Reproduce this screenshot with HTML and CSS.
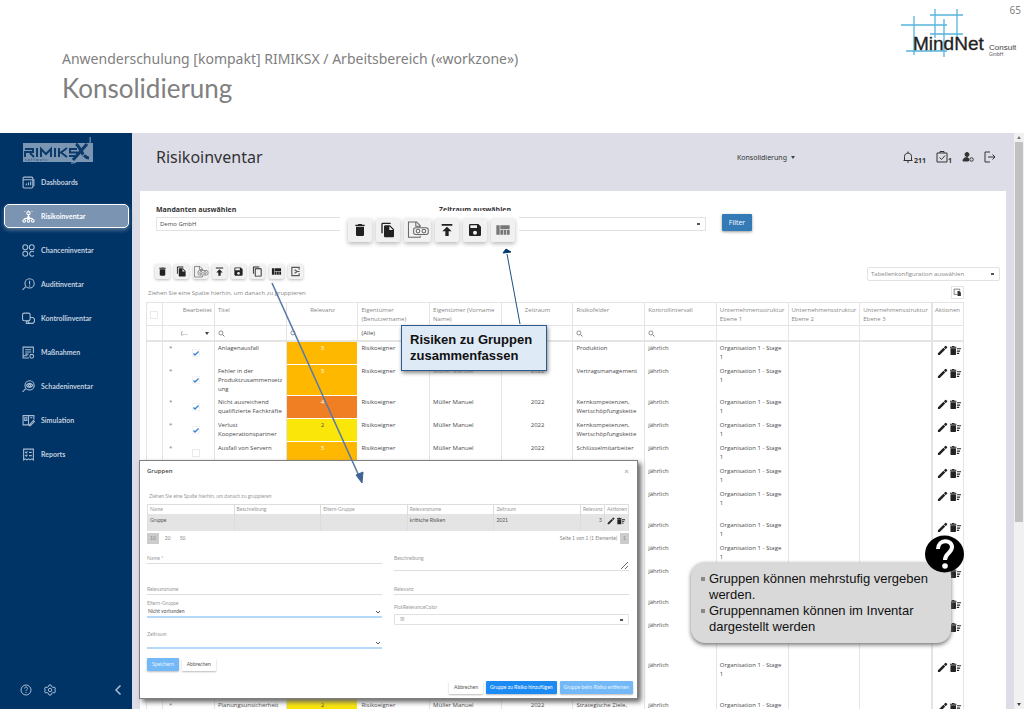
FILE: index.html
```html
<!DOCTYPE html>
<html lang="de">
<head>
<meta charset="utf-8">
<title>Konsolidierung – RIMIKSX</title>
<link rel="stylesheet" href="styles.css">
</head>
<body>
<svg class="sprite" aria-hidden="true">
  <symbol id="trash" viewBox="0 0 24 24"><path d="M6 19c0 1.100.9 2 2 2h8c1.100 0 2-.9 2-2V7H6zM19 4h-3.500l-1-1h-5l-1 1H5v2h14z"/></symbol>
  <symbol id="copyfill" viewBox="0 0 24 24"><path d="M16 1H4C2.900 1 2 1.900 2 3v14h2V3h12zM15 5H8C6.900 5 6 5.900 6 7v14c0 1.100.9 2 2 2h11c1.100 0 2-.9 2-2V11zm-1 7V6.500l5.500 5.500z"/></symbol>
  <symbol id="copy" viewBox="0 0 24 24"><path d="M16 1H4C2.900 1 2 1.900 2 3v14h2V3h12zm3 4H8C6.900 5 6 5.900 6 7v14c0 1.100.9 2 2 2h11c1.100 0 2-.9 2-2V7c0-1.100-.9-2-2-2zm0 16H8V7h11z"/></symbol>
  <symbol id="docview" viewBox="0 0 30 24"><g fill="none" stroke="#666" stroke-width="1.400"><path d="M18 8V6l-5-5H2v21h16v-2M12 1v6h6"/><rect x="9" y="9" width="20" height="9" rx="3"/><circle cx="15" cy="13.500" r="2.500"/><circle cx="23" cy="13.500" r="2.500"/></g></symbol>
  <symbol id="upload" viewBox="0 0 24 24"><path d="M4 3h16v2.500H4zM12 7l-7 7h4.500v7h5v-7H19z"/></symbol>
  <symbol id="save" viewBox="0 0 24 24"><path d="M17 3H5a2 2 0 0 0-2 2v14c0 1.100.9 2 2 2h14c1.100 0 2-.9 2-2V7zm-5 16a3 3 0 1 1 0-6 3 3 0 0 1 0 6zm3-10H5V5h10z" fill-rule="evenodd"/></symbol>
  <symbol id="quilt" viewBox="0 0 24 24"><path d="M2 5h5v14H2zM8 5h14v6H8zM8 12h4v7H8zM13 12h4v7h-4zM18 12h4v7h-4z"/></symbol>
  <symbol id="export" viewBox="0 0 24 24"><path d="M20 8V3H4v18h16v-5M10 8l6 4-6 4M16 12h5" fill="none" stroke="#555" stroke-width="2.500"/></symbol>
  <symbol id="chooser" viewBox="0 0 24 24"><path d="M3 3h15v4M3 3v14h8" fill="none" stroke="#555" stroke-width="2"/><path d="M12 8h5l4 4v9h-9z"/></symbol>
  <symbol id="pencil" viewBox="0 0 24 24"><path d="M2 18v4h4L18 10l-4-4zM22 6a1.500 1.500 0 0 0 0-2l-2-2a1.500 1.500 0 0 0-2 0l-3 3 4 4z"/></symbol>
  <symbol id="sweep" viewBox="0 0 24 24"><path d="M1 20c0 1 1 2 2 2h8c1 0 2-1 2-2V7H1zM14 4h-4L9 2H5L4 4H0v2h14zM15 7h9v2.500h-9zM15 12h7v2.500h-7zM15 17h5v2.500h-5z"/></symbol>
  <symbol id="search" viewBox="0 0 12 12"><circle cx="5" cy="5" r="3.500" fill="none" stroke="#666" stroke-width="1.200"/><path d="M8 8l3 3" stroke="#666" stroke-width="1.600"/></symbol>
</svg>

<header class="slide-head">
  <div class="slide-titles">
    <p class="slide-sub">Anwenderschulung [kompakt] RIMIKSX / Arbeitsbereich («workzone»)</p>
    <h1 class="slide-title">Konsolidierung</h1>
  </div>
  <svg class="brand" viewBox="0 0 118 52" role="img" aria-label="MindNet Consult GmbH">
    <g stroke="#56b4dc" stroke-width="1.300"><path d="M2 17h46M31 7h33M31 26h33M7 43h41M15 8v39M36 1v29M45 11v38M58 1v29"/></g>
    <text x="14" y="42" font-size="19" fill="#222" stroke="#222" stroke-width="0.300">MindNet</text>
    <text x="90" y="42" font-size="8" fill="#444">Consult</text>
    <text x="90" y="48" font-size="5" fill="#555">GmbH</text>
  </svg>
  <span class="page-no">65</span>
</header>

<div class="app">
  <nav class="side">
    <svg class="logo" viewBox="0 0 70 30" role="img" aria-label="RIMIKSX Software">
      <rect x="0" y="7" width="70" height="19" fill="#7b96b3"/>
      <g fill="none" stroke="#0b3a6b" stroke-width="2"><path d="M2 21v-5h8v-3H2M7 17l4 4M14 12v9M18 21v-8l5 5 5-5v8M32 12v9M36 12v9M44 12l-6 4.500 6 4.500M54 13h-7v3.500h7V20h-8"/></g>
      <path d="M53 8c5 3 6 14 13 14M64 8L50 24" fill="none" stroke="#0b3a6b" stroke-width="3"/>
      <path d="M48 27c9 1 21-17 19-26" fill="none" stroke="#7b96b3" stroke-width="1.200"/>
      <text x="2" y="25" font-size="4" fill="#1a4674">s o f t w a r e</text>
    </svg>
    <ul class="menu">
      <li><a href="#"><svg viewBox="0 0 24 24"><rect x="2" y="2" width="18" height="20" rx="2"/><path d="M2 7h20v12M8 17v-3M12 17v-5M16 17v-7"/></svg>Dashboards</a></li>
      <li><a href="#" class="active"><svg viewBox="0 0 24 24"><circle cx="12" cy="6" r="3"/><path d="M12 9v8M4 18c0-4 16-4 16 0M12 1V0M6 3L5 2M18 3l1-1M9 13h6"/><circle cx="4" cy="20" r="2.500"/><circle cx="12" cy="20" r="2.500"/><circle cx="20" cy="20" r="2.500"/></svg>Risikoinventar</a></li>
      <li><a href="#"><svg viewBox="0 0 24 24"><circle cx="6" cy="6" r="4.500"/><circle cx="18" cy="6" r="4.500"/><circle cx="6" cy="18" r="4.500"/><path d="M22 15a4.500 4.500 0 1 0 0 6"/></svg>Chanceninventar</a></li>
      <li><a href="#"><svg viewBox="0 0 24 24"><circle cx="14" cy="10" r="8.500"/><path d="M7 16l-6 6M14 5v7M14 14v2"/></svg>Auditinventar</a></li>
      <li><a href="#"><svg viewBox="0 0 24 24"><rect x="1" y="2" width="14" height="14" rx="3"/><path d="M15 10h5l3 3v5l-3 3h-6l-4-5M8 16v5h5"/></svg>Kontrollinventar</a></li>
      <li><a href="#"><svg viewBox="0 0 24 24"><path d="M13 22H2V2h19v11M6 7h11M6 11h11M6 15h6M2 18h8"/><circle cx="18" cy="19" r="3.500"/></svg>Maßnahmen</a></li>
      <li><a href="#"><svg viewBox="0 0 24 24"><circle cx="14" cy="10" r="8.500"/><path d="M7 16l-6 6M8 10c4-5 8-5 12 0-4 5-8 5-12 0"/><circle cx="14" cy="10" r="2"/></svg>Schadeninventar</a></li>
      <li><a href="#"><svg viewBox="0 0 24 24"><path d="M22 10V3H2v17h10M12 3v17M5 7h4v5H5zM15 7h4M13 21l8-9 2 2-8 8z"/></svg>Simulation</a></li>
      <li><a href="#"><svg viewBox="0 0 24 24"><path d="M3 22V2h18v20l-3-2-3 2-3-2-3 2-3-2zM6 7l2 2 2-3M6 13l2 2 2-3M13 8h5M13 14h5"/></svg>Reports</a></li>
    </ul>
    <div class="side-foot">
      <button class="plain" aria-label="Hilfe"><svg viewBox="0 0 24 24"><circle cx="12" cy="12" r="10"/><path d="M9 9c0-4 6-4 6 0 0 2-3 2-3 5M12 16v2"/></svg></button>
      <button class="plain" aria-label="Einstellungen"><svg viewBox="0 0 24 24"><path d="M10 2h4l1 3 3 2 3-1 2 4-2 2 2 2-2 4-3-1-3 2-1 3h-4l-1-3-3-2-3 1-2-4 2-2-2-2 2-4 3 1 3-2z"/><circle cx="12" cy="12" r="3.500"/></svg></button>
      <button class="plain last" aria-label="Einklappen"><svg viewBox="0 0 24 24"><path d="M17 3l-9 9 9 9" stroke-width="3"/></svg></button>
    </div>
  </nav>

  <main class="main">
    <div class="top">
      <h2 class="page-title">Risikoinventar</h2>
      <button class="mode">Konsolidierung <span class="caret"></span></button>
      <div class="top-icons">
        <button class="plain" aria-label="Benachrichtigungen"><svg viewBox="0 0 24 24"><path d="M3 19h18M5 18V11c0-9 14-9 14 0v7M12 4V1M10 22h4" /></svg><b>211</b></button>
        <button class="plain" aria-label="Aufgaben"><svg viewBox="0 0 24 24"><path d="M2 4h20v18H2zM8 4V1h8v3M7 13l4 4 7-8"/></svg><b>1</b></button>
        <button class="plain" aria-label="Benutzer"><svg viewBox="0 0 24 24"><g class="solid"><circle cx="10" cy="7" r="4"/><path d="M2 20c0-8 10-8 11-5v5z"/></g><circle cx="19" cy="17" r="3.500"/></svg></button>
        <button class="plain" aria-label="Abmelden"><svg viewBox="0 0 24 24"><path d="M12 2H2v20h10M8 12h14M17 7l5 5-5 5"/></svg></button>
      </div>
    </div>

    <section class="card">
      <div class="filters">
        <div class="field"><label for="mandant">Mandanten auswählen</label><select id="mandant"><option>Demo GmbH</option></select></div>
        <div class="field"><label for="zeit">Zeitraum auswählen</label><select id="zeit" class="arrow"><option></option></select></div>
        <button class="btn-filter">Filter</button>
      </div>

      <div class="tools">
        <div class="toolbar">
          <button aria-label="Löschen"><svg><use href="#trash"/></svg></button>
          <button aria-label="Kopieren"><svg><use href="#copyfill"/></svg></button>
          <button aria-label="Vorschau" class="wide"><svg><use href="#docview"/></svg></button>
          <button aria-label="Hochladen"><svg><use href="#upload"/></svg></button>
          <button aria-label="Speichern"><svg><use href="#save"/></svg></button>
          <button aria-label="Duplizieren"><svg><use href="#copy"/></svg></button>
          <button aria-label="Gruppieren"><svg><use href="#quilt"/></svg></button>
          <button aria-label="Exportieren"><svg><use href="#export"/></svg></button>
        </div>
        <select class="config arrow" aria-label="Tabellenkonfiguration"><option>Tabellenkonfiguration auswählen</option></select>
      </div>
      <div class="hint"><span>Ziehen Sie eine Spalte hierhin, um danach zu gruppieren</span><button class="chooser" aria-label="Spaltenauswahl"><svg><use href="#chooser"/></svg></button></div>

      <table class="grid">
        <colgroup><col class="c-check"><col class="c-edit"><col><col><col><col><col><col><col><col><col><col><col class="c-act"></colgroup>
        <thead>
          <tr class="heads"><th><input type="checkbox" aria-label="Alle auswählen"></th><th class="r">Bearbeitet</th><th>Titel</th><th class="c">Relevanz</th><th>Eigentümer (Benutzername)</th><th>Eigentümer (Vorname Name)</th><th class="c">Zeitraum</th><th>Risikofelder</th><th>Kontrollintervall</th><th>Unternehmensstruktur Ebene 1</th><th>Unternehmensstruktur Ebene 2</th><th>Unternehmensstruktur Ebene 3</th><th class="act">Aktionen</th></tr>
          <tr class="search"><td></td><td><div class="pick"><span>(...</span><span class="caret"></span></div></td><td><svg><use href="#search"/></svg></td><td><svg><use href="#search"/></svg></td><td>(Alle)</td><td><svg><use href="#search"/></svg></td><td></td><td><svg><use href="#search"/></svg></td><td><svg><use href="#search"/></svg></td><td></td><td></td><td></td><td class="act"></td></tr>
        </thead>
        <tbody>
          <tr class="h2"><td></td><td class="edit"><div><i>*</i><input type="checkbox" checked aria-label="Bearbeitet"></div></td><td>Anlagenausfall</td><td class="rel amber">3</td><td>Risikoeigner</td><td></td><td class="c"></td><td>Produktion</td><td>jährlich</td><td>Organisation 1 - Stage 1</td><td></td><td></td><td class="act"><button aria-label="Bearbeiten"><svg><use href="#pencil"/></svg></button><button aria-label="Löschen"><svg><use href="#sweep"/></svg></button></td></tr>
          <tr class="h3"><td></td><td class="edit"><div><i>*</i><input type="checkbox" checked aria-label="Bearbeitet"></div></td><td>Fehler in der Produktzusammensetzung</td><td class="rel amber">3</td><td>Risikoeigner</td><td>Müller Manuel</td><td class="c">2022</td><td>Vertragsmanagement</td><td>jährlich</td><td>Organisation 1 - Stage 1</td><td></td><td></td><td class="act"><button aria-label="Bearbeiten"><svg><use href="#pencil"/></svg></button><button aria-label="Löschen"><svg><use href="#sweep"/></svg></button></td></tr>
          <tr class="h2"><td></td><td class="edit"><div><i>*</i><input type="checkbox" checked aria-label="Bearbeitet"></div></td><td>Nicht ausreichend qualifizierte Fachkräfte</td><td class="rel orange">4</td><td>Risikoeigner</td><td>Müller Manuel</td><td class="c">2022</td><td>Kernkompetenzen, Wertschöpfungskette</td><td>jährlich</td><td>Organisation 1 - Stage 1</td><td></td><td></td><td class="act"><button aria-label="Bearbeiten"><svg><use href="#pencil"/></svg></button><button aria-label="Löschen"><svg><use href="#sweep"/></svg></button></td></tr>
          <tr class="h2"><td></td><td class="edit"><div><i>*</i><input type="checkbox" checked aria-label="Bearbeitet"></div></td><td>Verlust Kooperationspartner</td><td class="rel yellow">2</td><td>Risikoeigner</td><td>Müller Manuel</td><td class="c">2022</td><td>Kernkompetenzen, Wertschöpfungskette</td><td>jährlich</td><td>Organisation 1 - Stage 1</td><td></td><td></td><td class="act"><button aria-label="Bearbeiten"><svg><use href="#pencil"/></svg></button><button aria-label="Löschen"><svg><use href="#sweep"/></svg></button></td></tr>
          <tr class="h2"><td></td><td class="edit"><div><i>*</i><input type="checkbox" aria-label="Bearbeitet"></div></td><td>Ausfall von Servern</td><td class="rel amber">3</td><td>Risikoeigner</td><td>Müller Manuel</td><td class="c">2022</td><td>Schlüsselmitarbeiter</td><td>jährlich</td><td>Organisation 1 - Stage 1</td><td></td><td></td><td class="act"><button aria-label="Bearbeiten"><svg><use href="#pencil"/></svg></button><button aria-label="Löschen"><svg><use href="#sweep"/></svg></button></td></tr>
          <tr class="h2"><td></td><td></td><td></td><td></td><td></td><td></td><td></td><td></td><td>jährlich</td><td>Organisation 1 - Stage 1</td><td></td><td></td><td class="act"><button aria-label="Bearbeiten"><svg><use href="#pencil"/></svg></button><button aria-label="Löschen"><svg><use href="#sweep"/></svg></button></td></tr>
          <tr class="h3"><td></td><td></td><td></td><td></td><td></td><td></td><td></td><td></td><td>jährlich</td><td>Organisation 1 - Stage 1</td><td></td><td></td><td class="act"><button aria-label="Bearbeiten"><svg><use href="#pencil"/></svg></button><button aria-label="Löschen"><svg><use href="#sweep"/></svg></button></td></tr>
          <tr class="h2"><td></td><td></td><td></td><td></td><td></td><td></td><td></td><td></td><td>jährlich</td><td>Organisation 1 - Stage 1</td><td></td><td></td><td class="act"><button aria-label="Bearbeiten"><svg><use href="#pencil"/></svg></button><button aria-label="Löschen"><svg><use href="#sweep"/></svg></button></td></tr>
          <tr class="h2"><td></td><td></td><td></td><td></td><td></td><td></td><td></td><td></td><td>jährlich</td><td>Organisation 1 - Stage 1</td><td></td><td></td><td class="act"><button aria-label="Bearbeiten"><svg><use href="#pencil"/></svg></button><button aria-label="Löschen"><svg><use href="#sweep"/></svg></button></td></tr>
          <tr class="h3"><td></td><td></td><td></td><td></td><td></td><td></td><td></td><td></td><td>jährlich</td><td></td><td></td><td></td><td class="act"><button aria-label="Bearbeiten"><svg><use href="#pencil"/></svg></button><button aria-label="Löschen"><svg><use href="#sweep"/></svg></button></td></tr>
          <tr class="h2"><td></td><td></td><td></td><td></td><td></td><td></td><td></td><td></td><td>jährlich</td><td></td><td></td><td></td><td class="act"><button aria-label="Bearbeiten"><svg><use href="#pencil"/></svg></button><button aria-label="Löschen"><svg><use href="#sweep"/></svg></button></td></tr>
          <tr class="h4"><td></td><td></td><td></td><td></td><td></td><td></td><td></td><td></td><td>jährlich</td><td></td><td></td><td></td><td class="act"><button aria-label="Bearbeiten"><svg><use href="#pencil"/></svg></button><button aria-label="Löschen"><svg><use href="#sweep"/></svg></button></td></tr>
          <tr class="h4"><td></td><td></td><td></td><td></td><td></td><td></td><td></td><td></td><td>jährlich</td><td>Organisation 1 - Stage 1</td><td></td><td></td><td class="act"><button aria-label="Bearbeiten"><svg><use href="#pencil"/></svg></button><button aria-label="Löschen"><svg><use href="#sweep"/></svg></button></td></tr>
          <tr class="h2"><td></td><td class="edit"><div><i>*</i></div></td><td>Planungsunsicherheit</td><td class="rel yellow">2</td><td>Risikoeigner</td><td>Müller Manuel</td><td class="c">2022</td><td>Strategische Ziele, </td><td>jährlich</td><td>Organisation 1 - Stage</td><td></td><td></td><td class="act"><button aria-label="Bearbeiten"><svg><use href="#pencil"/></svg></button><button aria-label="Löschen"><svg><use href="#sweep"/></svg></button></td></tr>
        </tbody>
      </table>
    </section>
  </main>
  <div class="scroll" aria-hidden="true"><span class="up"></span><span class="thumb"></span><span class="down"></span></div>
</div>

<div class="toolbar zoomed">
  <button aria-label="Löschen"><svg><use href="#trash"/></svg></button>
  <button aria-label="Kopieren"><svg><use href="#copyfill"/></svg></button>
  <button aria-label="Vorschau" class="wide"><svg><use href="#docview"/></svg></button>
  <button aria-label="Hochladen"><svg><use href="#upload"/></svg></button>
  <button aria-label="Speichern"><svg><use href="#save"/></svg></button>
  <button aria-label="Gruppieren" class="faded"><svg><use href="#quilt"/></svg></button>
</div>

<section class="dialog" role="dialog" aria-labelledby="dlg-title">
  <div class="dlg-head"><h3 id="dlg-title">Gruppen</h3><button class="plain" aria-label="Schließen">×</button></div>
  <p class="dlg-hint">Ziehen Sie eine Spalte hierhin, um danach zu gruppieren</p>
  <table class="mini">
    <colgroup><col><col><col><col><col><col class="c-n"><col class="c-n"></colgroup>
    <thead><tr><th>Name</th><th>Beschreibung</th><th>Eltern-Gruppe</th><th>Relevanzname</th><th>Zeitraum</th><th class="r">Relevanz</th><th>Aktionen</th></tr></thead>
    <tbody><tr><td>Gruppe</td><td></td><td></td><td>kritische Risiken</td><td>2021</td><td class="r">3</td><td class="act"><button aria-label="Bearbeiten"><svg><use href="#pencil"/></svg></button><button aria-label="Löschen"><svg><use href="#sweep"/></svg></button></td></tr></tbody>
  </table>
  <div class="pager"><button class="on">10</button><button>20</button><button>50</button><span>Seite 1 von 1 (1 Elemente)</span><button class="on">1</button></div>
  <form class="form">
    <div class="col">
      <div class="line f1"><label for="n">Name *</label><input id="n"></div>
      <div class="line f2"><label for="rn">Relevanzname</label><input id="rn"></div>
      <div class="line blue f3"><label for="eg">Eltern-Gruppe</label><select id="eg"><option>Nicht vorhanden</option></select></div>
      <div class="line blue f4"><label for="zr">Zeitraum</label><select id="zr"><option></option></select></div>
      <div class="acts"><button type="button" class="b light">Speichern</button><button type="button" class="b white">Abbrechen</button></div>
    </div>
    <div class="col">
      <div class="line f5"><label for="be">Beschreibung</label><textarea id="be"></textarea></div>
      <div class="line f6"><label for="re">Relevanz</label><input id="re"></div>
      <div class="color"><label for="pc">PickRelevanceColor</label><select id="pc" class="arrow"><option>☒</option></select></div>
    </div>
  </form>
  <div class="dlg-foot"><button class="b white">Abbrechen</button><button class="b blue-btn">Gruppe zu Risiko hinzufügen</button><button class="b light">Gruppe beim Risiko entfernen</button></div>
</section>

<svg class="arrows" viewBox="0 0 260 240" aria-hidden="true">
  <path d="M4 38l87 193" stroke="#587ba8" stroke-width="1.600"/>
  <path d="M94 238l-6-8 7-3z" fill="#3d6496" stroke="#3d6496"/>
  <path d="M252 79l-13-70" stroke="#1c4f82" stroke-width="1"/>
  <path d="M235 8l3-4 5 3z" fill="#003a70" stroke="#003a70"/>
</svg>
<p class="callout">Risiken zu Gruppen zusammenfassen</p>
<aside class="note"><ul><li>Gruppen können mehrstufig vergeben werden.</li><li>Gruppennamen können im Inventar dargestellt werden</li></ul></aside>
<svg class="question" viewBox="0 0 39 38" role="img" aria-label="Frage"><ellipse cx="19.500" cy="19" rx="19.500" ry="18.500"/><path d="M13 14c0-10 14-10 14-2 0 6-7 6-7 13" fill="none" stroke="#fff" stroke-width="4"/><circle cx="20" cy="31" r="2.800" fill="#fff"/></svg>
</body>
</html>
```
FILE: styles.css
```css
* { box-sizing: border-box; }
body { margin: 0; height: 100vh; overflow: hidden; position: relative; display: flex; flex-direction: column; background: #fff; font: 6px/9px "Open Sans", "Noto Sans", sans-serif; color: #4a4a4a; }
h1, h2, h3, p, ul { margin: 0; padding: 0; font-weight: 400; }
ul { list-style: none; }
button, select, input, textarea { font: inherit; color: inherit; margin: 0; padding: 0; border: 0; border-radius: 0; background: none; appearance: none; outline: 0; }
a { text-decoration: none; color: inherit; }
svg { display: block; }
.sprite { position: absolute; width: 0; height: 0; }
.plain { display: flex; align-items: center; }

/* slide header */
.slide-head { flex: none; height: 133px; display: flex; align-items: flex-start; color: #808080; }
.slide-titles { flex: 1; padding: 49px 0 0 62px; }
.slide-sub { font: 14px/20px "Noto Sans", sans-serif; }
.slide-title { font: 26px/38px Lato, sans-serif; }
.brand { width: 118px; height: 52px; margin-top: 8px; font-family: "Liberation Sans", sans-serif; }
.page-no { width: 24px; margin: 4px 3px 0 -20px; text-align: right; font: 10px/12px "Noto Sans", sans-serif; }

.app { flex: 1; min-height: 0; display: flex; background: #dddde8; }

/* sidebar */
.side { width: 132px; flex: none; display: flex; flex-direction: column; background: #003366; color: #c2d0df; font-family: Lato, sans-serif; }
.side svg { fill: none; stroke: #a9bdd2; stroke-width: 2; width: 12px; height: 12px; }
.side .logo { width: 70px; height: 30px; margin: 3px 0 0 23px; stroke: none; }
.menu { display: flex; flex-direction: column; gap: 10px; padding: 4px 3px 0 4px; }
.menu a { display: flex; align-items: center; gap: 6px; height: 24px; padding-left: 17px; border: 1px solid transparent; border-radius: 5px; font-size: 7px; font-weight: 700; }
.menu svg { width: 13px; height: 13px; }
.menu a.active { background: #7a94b1; border-color: #fff; color: #fff; box-shadow: 0 2px 4px #5a7898; }
.menu .active svg { stroke: #fff; }
.side-foot { display: flex; gap: 12px; margin-top: auto; padding: 0 8px 13px 20px; }
.side-foot .last { margin-left: auto; }

/* main */
.main { flex: 1; min-width: 0; display: flex; flex-direction: column; padding: 0 8px; }
.top { flex: none; height: 58px; display: flex; align-items: center; padding: 0 10px 10px 16px; color: #333; }
.page-title { flex: 1; font: 16px/24px "Noto Sans", sans-serif; }
.mode { font: 7px/9px "Noto Sans", sans-serif; display: flex; align-items: center; gap: 4px; margin-right: 107px; }
.caret { border: 2px solid transparent; border-top: 3px solid #444; border-bottom: 0; }
.top-icons { display: flex; gap: 10px; }
.top-icons svg { width: 12px; height: 12px; fill: none; stroke: #333; stroke-width: 2; }
.top-icons .solid { fill: #333; }
.top-icons b { font-size: 7px; line-height: 8px; align-self: flex-end; margin-bottom: -2px; }
.card { flex: 1; min-height: 0; overflow: hidden; background: #fff; padding: 14px 6px 0; }
.filters { display: flex; gap: 16px; padding: 0 10px; }
.field { width: 267px; }
.field label { display: block; font-size: 7px; line-height: 9px; font-weight: 700; color: #333; margin-bottom: 3px; }
select { width: 100%; height: 14px; padding: 0 3px; border: 1px solid #e2e2e2; border-radius: 1px; }
.arrow { background: linear-gradient(#555, #555) no-repeat right 5px center / 3px 2px; }
.btn-filter { align-self: flex-end; width: 30px; height: 17px; font-size: 7px; color: #fff; background: #337ab7; box-shadow: 0 1px 3px #999; border-radius: 1px; }
.tools { display: flex; justify-content: space-between; margin-top: 33px; padding-left: 9px; }
.toolbar { display: flex; gap: 4px; }
.toolbar button { width: 15px; height: 15px; display: grid; place-items: center; background: #f1f1f1; border-radius: 2px; box-shadow: 0 1px 3px #bbb; }
.toolbar svg { width: 11px; height: 11px; fill: #222; }
.toolbar .wide svg { width: 16px; height: 12px; }
.config { width: 133px; margin-top: 3px; color: #888; border-radius: 2px; }
.hint { display: flex; justify-content: space-between; align-items: center; height: 21px; padding: 1px 36px 0 2px; color: #888; }
.hint span { padding-top: 2px; }
.chooser { width: 13px; height: 13px; display: grid; place-items: center; border: 1px solid #e5e5e5; }
.chooser svg { width: 9px; height: 9px; fill: #333; }

/* grid */
.grid { width: calc(100% - 36px); table-layout: fixed; border-collapse: separate; border-spacing: 0; border-left: 1px solid #e4e4e4; }
.c-check { width: 16px; } .c-edit { width: 52px; } .c-act { width: 32px; }
.grid th, .grid td { padding: 2px 2px 0 3px; border-right: 1px solid #e4e4e4; vertical-align: top; text-align: left; overflow-wrap: anywhere; overflow: hidden; }
.grid th { height: 23px; padding-top: 3px; font-weight: 400; color: #888; border-top: 1px solid #e4e4e4; white-space: normal; }
.grid .search td { height: 17px; border-top: 1px solid #e4e4e4; border-bottom: 2px solid #e4e4e4; vertical-align: middle; padding-top: 0; }
.search svg { width: 7px; height: 7px; }
.pick { display: flex; justify-content: space-between; align-items: center; padding: 0 3px 0 15px; }
.grid .c { text-align: center; } .grid .r { text-align: right; }
.grid tbody tr { height: 23px; } .grid tbody .h3 { height: 31px; } .grid tbody .h4 { height: 40px; }
.grid .rel { text-align: center; color: #fff; border-bottom: 1px solid #fff; border-right-color: #fff; }
.grid .amber { background: #ffb800; } .grid .orange { background: #ef7f22; } .grid .yellow { background: #fbe60a; color: #555; }
input[type="checkbox"] { display: block; width: 8px; height: 8px; border: 1px solid #eaeaea; }
.grid th input { margin: 5px 0 0; }
.edit div { display: flex; justify-content: space-between; padding: 0 12px 0 3px; }
.edit i { font-style: normal; line-height: 8px; color: #777; }
.edit input { margin-top: 5px; }
.h3 .edit input { margin-top: 9px; }
.edit input:checked { border-color: #f3f3f3; background: no-repeat center / 6px 5px url("data:image/svg+xml,%3Csvg xmlns='http://www.w3.org/2000/svg' viewBox='0 0 12 10'%3E%3Cpath d='M1 5l3 3 7-7' fill='none' stroke='%232f7fd6' stroke-width='2.500'/%3E%3C/svg%3E"); }
.grid .act { border-left: 1px solid #e4e4e4; padding-left: 2px; white-space: nowrap; }
.grid td.act { padding-left: 4px; padding-top: 3px; }
.act button { display: inline-block; margin-right: 2px; }
.act svg { width: 11px; height: 11px; fill: #222; }

.scroll { width: 10px; display: flex; flex-direction: column; align-items: center; background: #f1f1f1; flex: none; }
.scroll .thumb { width: 8px; flex: 0 0 66%; background: #c1c1c1; }
.scroll .up { margin: 3px 0; border: 2px solid transparent; border-bottom: 3px solid #777; border-top: 0; }
.scroll .down { margin: auto 0 3px; border: 2px solid transparent; border-top: 3px solid #444; border-bottom: 0; }

/* enlarged toolbar laid over the filters */
.zoomed { position: absolute; left: 340px; top: 211px; padding: 7px 4px 4px 8px; gap: 4px; background: #fff; }
.zoomed button { width: 24px; height: 24px; box-shadow: 0 2px 4px #bbb; }
.zoomed svg { width: 16px; height: 16px; }
.zoomed .wide { width: 27px; }
.zoomed .wide svg { width: 22px; height: 18px; }
.zoomed .faded svg { fill: #777; }

/* dialog */
.dialog { position: absolute; left: 139px; top: 460px; width: 499px; height: 239px; padding: 0 8px 0 7px; display: flex; flex-direction: column; background: #fff; border: 1px solid #7f7f7f; box-shadow: 3px 3px 5px #666; font: 5px/7px Lato, sans-serif; color: #777; }
.dlg-head { display: flex; justify-content: space-between; align-items: center; height: 21px; }
.dlg-head h3 { font: 600 6px/9px "Open Sans", sans-serif; color: #444; }
.dlg-head button { font-size: 8px; color: #999; }
.dlg-hint { padding: 11px 2px 4px; color: #999; }
.mini { width: 100%; table-layout: fixed; border-spacing: 0; border-left: 1px solid #e0e0e0; }
.mini .c-n { width: 24px; }
.mini th, .mini td { padding: 1px 2px; border-right: 1px solid #ddd; text-align: left; font-weight: 400; vertical-align: top; white-space: nowrap; }
.mini th { height: 10px; border-top: 1px solid #ddd; color: #999; }
.mini td { height: 17px; background: #e4e4e4; padding-top: 3px; color: #555; }
.mini .r { text-align: right; }
.mini td.act { padding: 3px 2px 0; }
.mini .act svg { width: 8px; height: 8px; }
.pager { display: flex; align-items: center; height: 15px; gap: 3px; color: #888; }
.pager button { min-width: 8px; height: 11px; padding: 0 3px; }
.pager .on { background: #ccc; }
.pager span { margin-left: auto; }
.form { display: grid; grid-template-columns: 1fr 1fr; gap: 12px; }
.line { display: flex; flex-direction: column; justify-content: flex-end; border-bottom: 1px solid #ddd; color: #999; }
.line input { height: 1px; }
.line textarea { height: 8px; resize: vertical; }
.f1 { height: 18px; } .f2 { height: 31px; } .f5 { height: 25px; } .f6 { height: 24px; }
.line.blue { height: 23px; border-bottom: 2px solid #b5d9fa; }
.line.f4 { height: 31px; }
.line select { height: 9px; padding: 0 1px; border: 0; color: #555; background: no-repeat right 1px center / 6px 4px url("data:image/svg+xml,%3Csvg xmlns='http://www.w3.org/2000/svg' viewBox='0 0 6 4'%3E%3Cpath d='M1 1l2 2 2-2' fill='none' stroke='%23555'/%3E%3C/svg%3E"); }
.acts { display: flex; gap: 3px; padding-top: 9px; }
.color { padding-top: 9px; color: #999; }
.color label { display: block; margin-bottom: 3px; }
.color select { height: 11px; padding-left: 5px; }
.b { height: 13px; padding: 0 4px; font-size: 5px; border-radius: 1px; box-shadow: 0 1px 2px #bbb; white-space: nowrap; }
.light { background: #74b9f7; color: #e8f4ff; }
.blue-btn { background: #1c8af3; color: #fff; }
.white { background: #fff; color: #555; }
.dlg-foot { margin: auto -4px 4px 0; display: flex; justify-content: flex-end; gap: 3px; }
.acts .b, .dlg-foot .white { padding: 0 5px; }

/* annotations */
.arrows { position: absolute; left: 268px; top: 245px; width: 260px; height: 240px; }
.callout { position: absolute; left: 401px; top: 325px; width: 146px; padding: 6px 8px; background: #dfeaf7; border: 1px solid #2a5a8e; box-shadow: 1px 2px 4px #888; font: 700 13px/16px "Liberation Sans", sans-serif; color: #111; }
.note { position: absolute; left: 691px; top: 562px; width: 260px; padding: 9px 8px 8px 10px; border-radius: 14px; background: #d9d9d9; box-shadow: 0 2px 4px #777; font: 13px/16px "Liberation Sans", sans-serif; color: #111; }
.note li { position: relative; padding-left: 8px; }
.note li::before { content: ""; position: absolute; left: 0; top: 6px; width: 4px; height: 4px; background: #888; }
.question { position: absolute; left: 925px; top: 535px; width: 39px; height: 38px; }
```
